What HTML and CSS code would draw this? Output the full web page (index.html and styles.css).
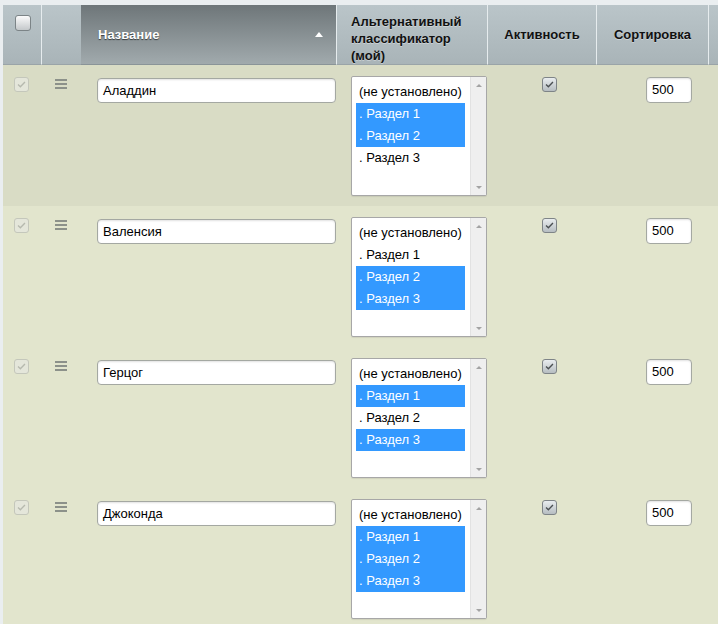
FILE: index.html
```html
<!DOCTYPE html>
<html lang="ru">
<head>
<meta charset="utf-8">
<title>Список</title>
<link rel="stylesheet" href="styles.css">
</head>
<body>
<div class="page">
  <table class="grid">
    <thead>
      <tr>
        <th class="c-check"><span class="hcb"></span></th>
        <th class="c-drag"></th>
        <th class="c-name"><div class="name-head"><span>Название</span><span class="sort-arrow"></span></div></th>
        <th class="c-alt">Альтернативный классификатор (мой)</th>
        <th class="c-act">Активность</th>
        <th class="c-sort">Сортировка</th>
        <th class="c-rest"></th>
      </tr>
    </thead>
    <tbody>
      <tr class="row hover">
        <td class="d-check"><span class="dcb"><svg viewBox="0 0 15 15"><path d="M3.5 7.5 L6.2 10 L11.5 4.5" /></svg></span></td>
        <td class="d-drag"><span class="drag"><i></i><i></i><i></i></span></td>
        <td class="d-name"><div class="txt">Аладдин</div></td>
        <td class="d-alt">
          <div class="listbox">
            <div class="opts">
              <div class="opt">(не установлено)</div>
              <div class="opt sel">. Раздел 1</div>
              <div class="opt sel">. Раздел 2</div>
              <div class="opt">. Раздел 3</div>
            </div>
            <div class="sbar"><span class="up"></span><span class="down"></span></div>
          </div>
        </td>
        <td class="d-act"><span class="acb"><svg viewBox="0 0 15 15"><path d="M3.5 7.5 L6.2 10 L11.5 4.5" /></svg></span></td>
        <td class="d-sort"><div class="num">500</div></td>
        <td class="d-rest"></td>
      </tr>
      <tr class="row">
        <td class="d-check"><span class="dcb"><svg viewBox="0 0 15 15"><path d="M3.5 7.5 L6.2 10 L11.5 4.5" /></svg></span></td>
        <td class="d-drag"><span class="drag"><i></i><i></i><i></i></span></td>
        <td class="d-name"><div class="txt">Валенсия</div></td>
        <td class="d-alt">
          <div class="listbox">
            <div class="opts">
              <div class="opt">(не установлено)</div>
              <div class="opt">. Раздел 1</div>
              <div class="opt sel">. Раздел 2</div>
              <div class="opt sel">. Раздел 3</div>
            </div>
            <div class="sbar"><span class="up"></span><span class="down"></span></div>
          </div>
        </td>
        <td class="d-act"><span class="acb"><svg viewBox="0 0 15 15"><path d="M3.5 7.5 L6.2 10 L11.5 4.5" /></svg></span></td>
        <td class="d-sort"><div class="num">500</div></td>
        <td class="d-rest"></td>
      </tr>
      <tr class="row">
        <td class="d-check"><span class="dcb"><svg viewBox="0 0 15 15"><path d="M3.5 7.5 L6.2 10 L11.5 4.5" /></svg></span></td>
        <td class="d-drag"><span class="drag"><i></i><i></i><i></i></span></td>
        <td class="d-name"><div class="txt">Герцог</div></td>
        <td class="d-alt">
          <div class="listbox">
            <div class="opts">
              <div class="opt">(не установлено)</div>
              <div class="opt sel">. Раздел 1</div>
              <div class="opt">. Раздел 2</div>
              <div class="opt sel">. Раздел 3</div>
            </div>
            <div class="sbar"><span class="up"></span><span class="down"></span></div>
          </div>
        </td>
        <td class="d-act"><span class="acb"><svg viewBox="0 0 15 15"><path d="M3.5 7.5 L6.2 10 L11.5 4.5" /></svg></span></td>
        <td class="d-sort"><div class="num">500</div></td>
        <td class="d-rest"></td>
      </tr>
      <tr class="row">
        <td class="d-check"><span class="dcb"><svg viewBox="0 0 15 15"><path d="M3.5 7.5 L6.2 10 L11.5 4.5" /></svg></span></td>
        <td class="d-drag"><span class="drag"><i></i><i></i><i></i></span></td>
        <td class="d-name"><div class="txt">Джоконда</div></td>
        <td class="d-alt">
          <div class="listbox">
            <div class="opts">
              <div class="opt">(не установлено)</div>
              <div class="opt sel">. Раздел 1</div>
              <div class="opt sel">. Раздел 2</div>
              <div class="opt sel">. Раздел 3</div>
            </div>
            <div class="sbar"><span class="up"></span><span class="down"></span></div>
          </div>
        </td>
        <td class="d-act"><span class="acb"><svg viewBox="0 0 15 15"><path d="M3.5 7.5 L6.2 10 L11.5 4.5" /></svg></span></td>
        <td class="d-sort"><div class="num">500</div></td>
        <td class="d-rest"></td>
      </tr>
    </tbody>
  </table>
</div>
</body>
</html>
```
FILE: styles.css
```css
html, body {
  margin: 0;
  padding: 0;
  background: #eaeef0;
  overflow: hidden;
}
body {
  font-family: "Liberation Sans", Arial, sans-serif;
  font-size: 13px;
  color: #000;
}
.page {
  padding: 5px 0 0 3px;
  width: 715px;
}
.grid {
  table-layout: fixed;
  border-collapse: separate;
  border-spacing: 0;
  width: 715px;
}
.grid th {
  box-sizing: border-box;
  height: 60px;
  padding: 0;
  font-weight: bold;
  font-size: 13px;
  text-align: center;
  vertical-align: middle;
  color: #111;
  text-shadow: 0 1px 0 rgba(255,255,255,0.35);
  background: linear-gradient(#bac5c9, #a9b4b8);
  border-left: 1px solid #e6ecee;
  border-bottom: 1px solid #9aa4a8;
}
.grid th.c-check { width: 38px; border-left: 0; vertical-align: top; }
.grid th.c-drag { width: 40px; }
.grid th.c-name {
  width: 255px;
  border-left: 0;
  color: #fff;
  text-align: left;
  text-shadow: 0 1px 1px rgba(0,0,0,0.6);
  background: linear-gradient(#6e7679, #a1aaad);
  border-bottom-color: #8a9498;
}
.grid th.c-alt {
  width: 151px;
  text-align: left;
  vertical-align: top;
  padding: 8px 10px 0 14px;
  line-height: 17px;
}
.grid th.c-act { width: 109px; }
.grid th.c-sort { width: 112px; }
.grid th.c-rest { width: 10px; }

.hcb {
  display: block;
  width: 14px;
  height: 14px;
  margin: 10px 0 0 12px;
  border: 1px solid #7c8487;
  border-radius: 3px;
  background: linear-gradient(#fbfbfb, #c4c8ca);
}
.name-head {
  display: flex;
  align-items: center;
  justify-content: space-between;
  padding: 0 13px 0 17px;
}
.sort-arrow {
  width: 0;
  height: 0;
  border-left: 4px solid transparent;
  border-right: 4px solid transparent;
  border-bottom: 5px solid #fff;
}

.row td {
  height: 141px;
  box-sizing: border-box;
  padding: 0;
  vertical-align: top;
  background: #e2e5cd;
}
.row.hover td { background: #d9dcc5; }
.row td.d-check { padding: 12px 0 0 11px; }
.row td.d-drag { padding: 14px 0 0 14px; }
.row td.d-name { padding: 13px 0 0 16px; }
.row td.d-alt { padding: 11px 0 0 15px; }
.row td.d-act { padding: 12px 0 0 55px; }
.row td.d-sort { padding: 12px 0 0 50px; }

.dcb, .acb {
  display: block;
  box-sizing: border-box;
  width: 15px;
  height: 15px;
  border-radius: 3px;
}
.dcb svg, .acb svg {
  display: block;
  width: 13px;
  height: 13px;
  fill: none;
  stroke-width: 1.6;
}
.dcb {
  border: 1px solid #c4c7bb;
  background: #e4e6da;
}
.dcb svg { stroke: #b6b9ae; }
.acb {
  border: 1px solid #7e8487;
  background: linear-gradient(#e9edef, #b6bdc1);
}
.acb svg { stroke: #4a4f52; }

.drag {
  display: flex;
  flex-direction: column;
  gap: 2px;
  width: 12px;
}
.drag i {
  display: block;
  height: 2px;
  background: #8c918a;
}

.txt, .num {
  box-sizing: border-box;
  height: 25px;
  line-height: 23px;
  padding-left: 5px;
  background: #fff;
  border: 1px solid #a4a8a2;
  border-radius: 4px;
  box-shadow: inset 0 1px 2px rgba(0,0,0,0.12);
}
.txt { width: 239px; }
.num { width: 46px; height: 26px; line-height: 24px; }

.listbox {
  box-sizing: border-box;
  width: 136px;
  height: 120px;
  display: flex;
  background: #fff;
  border: 1px solid #a7a7a7;
  border-radius: 2px;
  box-shadow: 0 1px 1px rgba(0,0,0,0.08);
}
.opts {
  flex: 1;
  padding: 4px 5px 0 4px;
}
.opt {
  height: 22px;
  line-height: 22px;
  padding-left: 3px;
  white-space: nowrap;
}
.opt.sel {
  background: #3399ff;
  color: #fff;
}
.sbar {
  width: 16px;
  display: flex;
  flex-direction: column;
  justify-content: space-between;
  align-items: center;
  padding: 7px 0 6px;
  box-sizing: border-box;
  background: #efefef;
  border-left: 1px solid #e2e2e2;
}
.sbar .up, .sbar .down {
  width: 0;
  height: 0;
  border-left: 3px solid transparent;
  border-right: 3px solid transparent;
}
.sbar .up { border-bottom: 3px solid #a3a3a3; }
.sbar .down { border-top: 3px solid #a3a3a3; }
```
